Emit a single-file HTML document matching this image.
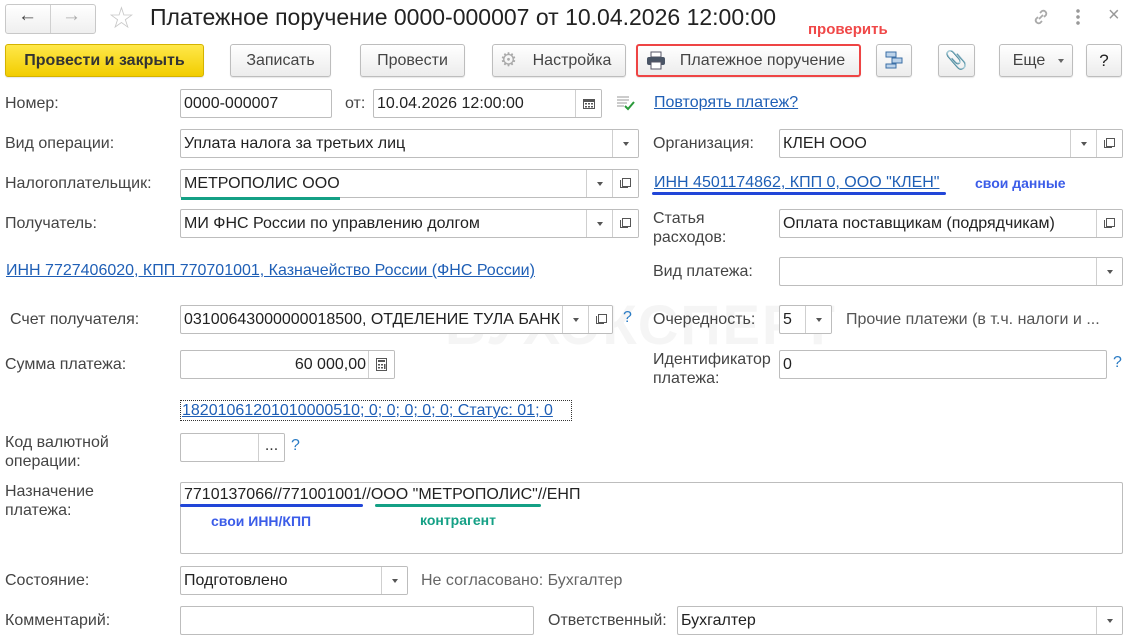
<!DOCTYPE html>
<html><head><meta charset="utf-8">
<style>
*{box-sizing:border-box}
body{margin:0;width:1131px;height:640px;background:#fff;font-family:"Liberation Sans",Arial,sans-serif;font-size:16px;color:#444;position:relative;overflow:hidden}
.a{position:absolute;white-space:nowrap}
.lb{position:absolute;white-space:nowrap;color:#444;line-height:19px}
.in{position:absolute;height:29px;border:1px solid #bdbdbd;border-radius:2px;background:#fff;color:#222;padding:0 3px;line-height:27px;overflow:hidden;white-space:nowrap}
.bt{position:absolute;top:0;height:27px;width:26px;border-left:1px solid #cfcfcf;background:#fff;z-index:2}
.dd::after{content:"";position:absolute;left:10px;top:12px;border-left:3px solid transparent;border-right:3px solid transparent;border-top:4px solid #555}
.op::after{content:"";position:absolute;left:9px;top:8px;width:7px;height:7px;border:1px solid #555;background:#fff}
.op::before{content:"";position:absolute;left:7px;top:10px;width:7px;height:7px;border-left:1px solid #555;border-bottom:1px solid #555}
.btn{position:absolute;top:44px;height:33px;border:1px solid #bdbdbd;border-radius:3px;background:linear-gradient(#fff,#ececec);color:#444;text-align:center;line-height:31px;box-shadow:0 1px 1px rgba(0,0,0,.1)}
.lnk{color:#1f5fb6;text-decoration:underline}
.q{position:absolute;color:#2a7bc4;font-size:16px}
</style></head><body>

<div class="a" style="left:445px;top:292px;font-size:56px;font-weight:bold;color:#f5f5f5;letter-spacing:2px">БУХЭКСПЕРТ</div>

<div class="a" style="left:5px;top:4px;width:91px;height:30px;border:1px solid #c8c8c8;border-radius:3px;background:linear-gradient(#fff,#efefef)"></div>
<div class="a" style="left:50px;top:5px;width:1px;height:28px;background:#d0d0d0"></div>
<div class="a" style="left:18px;top:5px;font-size:19px;color:#444;font-weight:bold">&#8592;</div>
<div class="a" style="left:62px;top:5px;font-size:19px;color:#aaa;font-weight:bold">&#8594;</div>
<div class="a" style="left:108px;top:1px;font-size:30px;color:#c8c8c8">&#9734;</div>
<div class="a" style="left:150px;top:4px;font-size:23px;color:#222">Платежное поручение 0000-000007 от 10.04.2026 12:00:00</div>
<svg class="a" style="left:1031px;top:7px" width="20" height="20" viewBox="0 0 20 20"><g fill="none" stroke="#aaa" stroke-width="1.8"><path d="M8 12l4-4"/><path d="M9 6l2-2a3 3 0 014 4l-2 2"/><path d="M11 14l-2 2a3 3 0 01-4-4l2-2"/></g></svg>
<div class="a" style="left:1076px;top:8px;width:4px;height:18px;background:radial-gradient(circle,#999 1.6px,transparent 2px) 0 0/4px 6px"></div>
<div class="a" style="left:1108px;top:4px;font-size:20px;color:#999">×</div>

<div class="a" style="left:808px;top:21px;color:#f04848;font-weight:bold;font-size:15px">проверить</div>
<div class="btn" style="left:5px;width:199px;background:linear-gradient(#ffe84a,#f2cd00);border-color:#d4b300;color:#333;font-weight:bold">Провести и закрыть</div>
<div class="btn" style="left:230px;width:101px">Записать</div>
<div class="btn" style="left:360px;width:105px">Провести</div>
<div class="btn" style="left:492px;width:134px;padding-left:26px">Настройка</div>
<div class="a" style="left:500px;top:49px;font-size:19px;color:#aaa">&#9881;</div>
<div class="btn" style="left:636px;width:225px;border:2px solid #ee4444;line-height:29px;padding-left:28px">Платежное поручение</div>
<svg class="a" style="left:646px;top:51px" width="20" height="19" viewBox="0 0 20 19"><rect x="5" y="1" width="10" height="5" fill="#fff" stroke="#556" /><rect x="1" y="6" width="18" height="8" rx="2" fill="#4a5566"/><rect x="5" y="11" width="10" height="7" fill="#fff" stroke="#556"/></svg>
<div class="btn" style="left:876px;width:36px"></div>
<svg class="a" style="left:884px;top:50px" width="20" height="20" viewBox="0 0 20 20"><g fill="#bcd3ea" stroke="#3a6ea5"><rect x="2" y="2" width="10" height="5"/><rect x="8" y="8" width="10" height="5"/><rect x="2" y="14" width="10" height="4"/></g></svg>
<div class="btn" style="left:938px;width:37px;font-size:18px;color:#666">&#128206;</div>
<div class="btn" style="left:999px;width:74px;padding-right:14px">Еще</div>
<div class="a" style="left:1058px;top:59px;border-left:3px solid transparent;border-right:3px solid transparent;border-top:4px solid #666"></div>
<div class="btn" style="left:1086px;width:36px;color:#222;font-size:17px">?</div>

<div class="lb" style="left:5px;top:94px">Номер:</div>
<div class="in" style="left:180px;top:89px;width:152px">0000-000007</div>
<div class="lb" style="left:345px;top:94px">от:</div>
<div class="in" style="left:373px;top:89px;width:229px">10.04.2026 12:00:00<div class="bt" style="right:0"><svg style="position:absolute;left:7px;top:8px" width="12" height="11"><rect x="0.5" y="1.5" width="11" height="9" fill="none" stroke="#555"/><rect x="0" y="1" width="12" height="3" fill="#555"/><g fill="#555"><rect x="2" y="5" width="2" height="1.5"/><rect x="5" y="5" width="2" height="1.5"/><rect x="8" y="5" width="2" height="1.5"/><rect x="2" y="8" width="2" height="1.5"/><rect x="5" y="8" width="2" height="1.5"/><rect x="8" y="8" width="2" height="1.5"/></g></svg></div></div>
<svg class="a" style="left:616px;top:95px" width="20" height="16"><g stroke="#999"><path d="M1 2h12M1 5h12M1 8h10M1 11h7"/></g><path d="M9 11l3 3 6-7" stroke="#2a9a3a" stroke-width="2" fill="none"/></svg>
<div class="a lnk" style="left:654px;top:94px">Повторять платеж?</div>

<div class="lb" style="left:5px;top:134px">Вид операции:</div>
<div class="in" style="left:180px;top:129px;width:459px">Уплата налога за третьих лиц<div class="bt dd" style="right:0"></div></div>
<div class="lb" style="left:653px;top:134px">Организация:</div>
<div class="in" style="left:779px;top:129px;width:344px">КЛЕН ООО<div class="bt dd" style="right:26px"></div><div class="bt op" style="right:0"></div></div>

<div class="lb" style="left:5px;top:174px">Налогоплательщик:</div>
<div class="in" style="left:180px;top:169px;width:459px">МЕТРОПОЛИС ООО<div class="bt dd" style="right:26px"></div><div class="bt op" style="right:0"></div></div>
<div class="a" style="left:181px;top:197px;width:159px;height:3px;background:#14a085"></div>
<div class="a lnk" style="left:654px;top:174px">ИНН 4501174862, КПП 0, ООО "КЛЕН"</div>
<div class="a" style="left:652px;top:192px;width:294px;height:3px;background:#2146d8;border-radius:2px"></div>
<div class="a" style="left:975px;top:175px;color:#3b5ce8;font-weight:bold;font-size:14px">свои данные</div>

<div class="lb" style="left:5px;top:214px">Получатель:</div>
<div class="in" style="left:180px;top:209px;width:459px">МИ ФНС России по управлению долгом<div class="bt dd" style="right:26px"></div><div class="bt op" style="right:0"></div></div>
<div class="lb" style="left:653px;top:209px">Статья<br>расходов:</div>
<div class="in" style="left:779px;top:209px;width:344px">Оплата поставщикам (подрядчикам)<div class="bt op" style="right:0"></div></div>

<div class="a lnk" style="left:6px;top:262px">ИНН 7727406020, КПП 770701001, Казначейство России (ФНС России)</div>
<div class="lb" style="left:653px;top:262px">Вид платежа:</div>
<div class="in" style="left:779px;top:257px;width:344px"><div class="bt dd" style="right:0"></div></div>

<div class="lb" style="left:10px;top:310px">Счет получателя:</div>
<div class="in" style="left:180px;top:305px;width:433px">03100643000000018500, ОТДЕЛЕНИЕ ТУЛА БАНК<div class="bt dd" style="right:24px"></div><div class="bt op" style="right:0;width:24px"></div></div>
<div class="q" style="left:623px;top:309px">?</div>
<div class="lb" style="left:653px;top:310px">Очередность:</div>
<div class="in" style="left:779px;top:305px;width:53px">5<div class="bt dd" style="right:0"></div></div>
<div class="lb" style="left:846px;top:310px;color:#555">Прочие платежи (в т.ч. налоги и ...</div>

<div class="lb" style="left:5px;top:355px">Сумма платежа:</div>
<div class="in" style="left:180px;top:350px;width:215px;text-align:right;padding-right:28px">60 000,00<div class="bt" style="right:0"><svg style="position:absolute;left:7px;top:7px" width="11" height="13"><rect x="0.5" y="0.5" width="10" height="12" fill="none" stroke="#555"/><rect x="2" y="2" width="7" height="2" fill="#555"/><g fill="#555"><rect x="2" y="6" width="2" height="1.5"/><rect x="5" y="6" width="2" height="1.5"/><rect x="2" y="9" width="2" height="1.5"/><rect x="5" y="9" width="2" height="1.5"/><rect x="8" y="6" width="1.5" height="5"/></g></svg></div></div>
<div class="lb" style="left:653px;top:350px">Идентификатор<br>платежа:</div>
<div class="in" style="left:779px;top:350px;width:328px">0</div>
<div class="q" style="left:1113px;top:354px">?</div>

<div class="a lnk" style="left:180px;top:400px;border:1px dotted #333;padding:0 1px;line-height:19px;width:392px;overflow:hidden">18201061201010000510; 0; 0; 0; 0; 0; Статус: 01; 0</div>

<div class="lb" style="left:5px;top:433px">Код валютной<br>операции:</div>
<div class="in" style="left:180px;top:433px;width:105px"><div class="bt" style="right:0;text-align:center;line-height:24px;color:#333">...</div></div>
<div class="q" style="left:291px;top:437px">?</div>

<div class="lb" style="left:5px;top:482px">Назначение<br>платежа:</div>
<div class="in" style="left:180px;top:482px;width:943px;height:72px;line-height:24px">7710137066//771001001//ООО "МЕТРОПОЛИС"//ЕНП</div>
<div class="a" style="left:180px;top:504px;width:183px;height:3px;background:#2146d8;border-radius:2px"></div>
<div class="a" style="left:375px;top:504px;width:166px;height:3px;background:#14a085;border-radius:2px"></div>
<div class="a" style="left:211px;top:513px;color:#3b5ce8;font-weight:bold;font-size:14px">свои ИНН/КПП</div>
<div class="a" style="left:420px;top:512px;color:#14a085;font-weight:bold;font-size:14px">контрагент</div>

<div class="lb" style="left:5px;top:571px">Состояние:</div>
<div class="in" style="left:180px;top:566px;width:228px">Подготовлено<div class="bt dd" style="right:0"></div></div>
<div class="lb" style="left:421px;top:571px;color:#666">Не согласовано: Бухгалтер</div>

<div class="lb" style="left:5px;top:611px">Комментарий:</div>
<div class="in" style="left:180px;top:606px;width:354px"></div>
<div class="lb" style="left:548px;top:611px">Ответственный:</div>
<div class="in" style="left:677px;top:606px;width:446px">Бухгалтер<div class="bt dd" style="right:0"></div></div>

</body></html>
